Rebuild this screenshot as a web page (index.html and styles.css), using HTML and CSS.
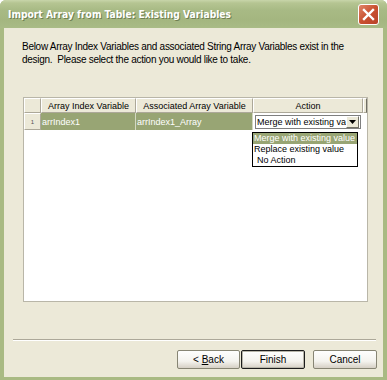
FILE: index.html
```html
<!DOCTYPE html>
<html>
<head>
<meta charset="utf-8">
<link rel="stylesheet" href="styles.css">
</head>
<body>
<div class="window">
  <div class="titlebar">
    <span class="title">Import Array from Table: Existing Variables</span>
    <span class="close">
      <svg width="21" height="21" viewBox="0 0 21 21">
        <path d="M6 6 L15 15 M15 6 L6 15" stroke="#fff" stroke-width="2.4" stroke-linecap="square"/>
      </svg>
    </span>
  </div>
  <div class="client">
    <p class="intro">Below Array Index Variables and associated String Array Variables exist in the<br>design.&nbsp; Please select the action you would like to take.</p>
    <div class="grid">
      <div class="row head">
        <div class="cell rh"></div>
        <div class="cell c1">Array Index Variable</div>
        <div class="cell c2">Associated Array Variable</div>
        <div class="cell c3">Action</div>
        <div class="cell c4"></div>
      </div>
      <div class="row data">
        <div class="cell rh">1</div>
        <div class="cell c1">arrIndex1</div>
        <div class="cell c2">arrIndex1_Array</div>
        <div class="cell c3">
          <div class="combo"><span class="combo-text">Merge with existing va</span><span class="combo-btn"><svg width="7" height="4" viewBox="0 0 7 4"><path d="M0 0 H7 L3.5 4 Z" fill="#000"/></svg></span></div>
        </div>
      </div>
      <ul class="droplist">
        <li class="hl">Merge with existing value</li>
        <li>Replace existing value</li>
        <li class="ind">No Action</li>
      </ul>
    </div>
    <div class="sep"></div>
    <div class="buttons">
      <button class="btn back">&lt; <u>B</u>ack</button>
      <button class="btn finish">Finish</button>
      <button class="btn cancel">Cancel</button>
    </div>
  </div>
</div>
</body>
</html>
```
FILE: styles.css
```css
* { box-sizing: border-box; }
html, body { margin: 0; padding: 0; background: #fff; }
body { font-family: "Liberation Sans", Arial, sans-serif; font-size: 10px; color: #000; }

.window {
  width: 387px;
  height: 380px;
  display: flex;
  flex-direction: column;
  background: #a9ba83;
  border-radius: 6px 6px 0 0;
  overflow: hidden;
}

.titlebar {
  height: 28px;
  flex: none;
  display: flex;
  align-items: center;
  justify-content: space-between;
  padding: 0 8px 0 8px;
  background: linear-gradient(#c8d5aa 0, #b5c592 3px, #a8ba85 10px, #a4b680 20px, #a9bb86 28px);
}
.title {
  color: #fff;
  font-family: "DejaVu Sans Condensed", "DejaVu Sans", sans-serif;
  font-stretch: condensed;
  font-weight: bold;
  font-size: 10.2px;
  text-shadow: 1px 1px 0 #6f7f52;
  margin-top: 1px;
}
.close {
  width: 21px;
  height: 21px;
  border: 1px solid #fff;
  border-radius: 3px;
  background: linear-gradient(135deg, #e0866a, #c9502f 50%, #b8432a);
  display: flex;
}
.close svg { display: block; margin: -1px; }

.client {
  flex: 1;
  margin: 0 4px 3px 4px;
  background: #ece9d8;
  display: flex;
  flex-direction: column;
}

.intro {
  margin: 12px 0 0 18px;
  line-height: 13px;
  font-size: 10px;
  letter-spacing: -0.28px;
}

.grid {
  position: relative;
  margin: 31px 0 0 19px;
  width: 345px;
  height: 205px;
  background: #fff;
  border: 1px solid #b9b6a8;
  font-size: 9px;
}
.row { display: flex; }
.head { height: 15px; }
.data { height: 17px; }
.cell {
  display: flex;
  align-items: center;
  white-space: nowrap;
  overflow: hidden;
}
.head .cell {
  justify-content: center;
  background: #ece9d8;
  border-top: 1px solid #fff;
  border-left: 1px solid #fff;
  border-right: 1px solid #aca899;
  border-bottom: 1px solid #aca899;
}
.rh { width: 17px; }
.c1 { width: 95px; }
.c2 { width: 117px; }
.c3 { width: 110px; }
.c4 { width: 4px; }
.head .c4 { border-right: 1px solid #716f64; }

.data .rh {
  justify-content: center;
  background: #ece9d8;
  border-top: 1px solid #fff;
  border-left: 1px solid #fff;
  border-right: 1px solid #aca899;
  border-bottom: 1px solid #aca899;
  font-size: 6px;
  color: #555;
}
.data .c1, .data .c2 {
  background: #98a574;
  color: #fff;
  padding-left: 1px;
  border-right: 1px solid #d3d8c0;
}
.data .c3 {
  background: #fff;
  padding: 2px 2px 0 2px;
  align-items: flex-start;
}
.combo {
  width: 106px;
  height: 14px;
  border: 1px solid #7f7f7f;
  display: flex;
  align-items: center;
  background: #fff;
}
.combo-text { flex: 1; overflow: hidden; padding-left: 1px; white-space: nowrap; }
.combo-btn {
  flex: none;
  width: 13px;
  height: 12px;
  margin-right: 1px;
  background: #ece9d8;
  border-top: 1px solid #fff;
  border-left: 1px solid #fff;
  border-right: 1px solid #716f64;
  border-bottom: 1px solid #716f64;
  display: flex;
  align-items: center;
  justify-content: center;
}
.combo-btn svg { display: block; }

.droplist {
  position: absolute;
  left: 228px;
  top: 34px;
  width: 106px;
  margin: 0;
  padding: 0;
  list-style: none;
  background: #fff;
  border: 1px solid #000;
}
.droplist li {
  height: 11px;
  line-height: 11px;
  padding-left: 1px;
  white-space: nowrap;
}
.droplist li.hl { background: #98a574; color: #fff; }
.droplist li.ind { padding-left: 4px; }

.sep {
  margin: 37px 0 0 9px;
  width: 363px;
  height: 2px;
  border-top: 1px solid #aca899;
  border-bottom: 1px solid #fff;
}

.buttons {
  display: flex;
  justify-content: flex-end;
  margin: 9px 6px 0 0;
}
.btn {
  font-family: "Liberation Sans", Arial, sans-serif;
  font-size: 10px;
  height: 19px;
  padding: 0;
  color: #000;
  background: linear-gradient(#fefefe, #f4f3ee 60%, #d6d0c5);
  border: 1px solid #878574;
  border-radius: 2px;
}
.back { width: 63px; }
.finish { width: 64px; margin-left: 1px; border: 1px solid #1c1c1c; box-shadow: inset 0 0 0 1px #b8b6aa; }
.cancel { width: 64px; margin-left: 8px; }
.btn u { text-decoration: underline; }
```
